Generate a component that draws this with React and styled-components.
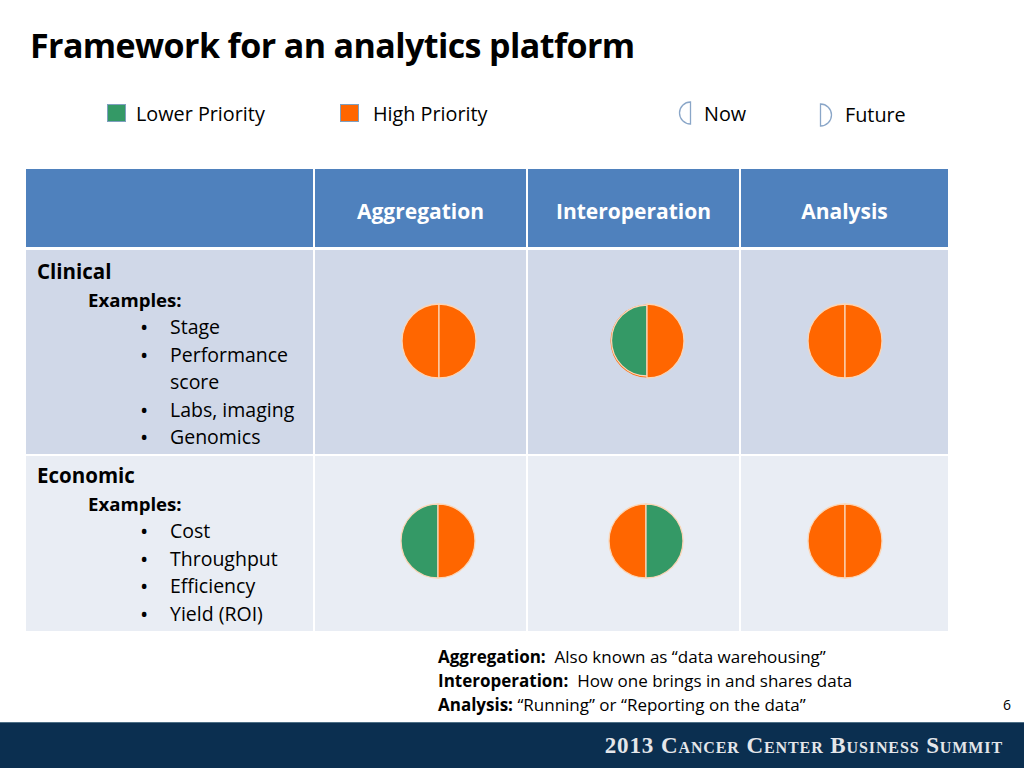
import React from 'react'
import styled, { createGlobalStyle } from 'styled-components'

const GlobalStyle = createGlobalStyle`
  html, body {
    margin: 0;
    padding: 0;
    background: #FFFFFF;
  }
  body {
    font-family: "Open Sans", "Noto Sans", sans-serif;
    color: #000000;
  }
`

const GREEN = '#349966'
const ORANGE = '#FF6600'

const Slide = styled.div`
  width: 1024px;
  height: 768px;
  display: flex;
  flex-direction: column;
  overflow: hidden;
`
const Title = styled.h1`
  margin: 0;
  height: 90px;
  padding-left: 30px;
  display: flex;
  align-items: center;
  font-size: 34px;
  font-weight: 700;
  letter-spacing: -0.6px;
`
const Legend = styled.div`
  height: 46px;
  padding-left: 107px;
  display: grid;
  grid-template-columns: 233px 338px 141px auto;
  align-items: center;
`
const LegendItem = styled.div`
  display: flex;
  align-items: center;
  gap: ${(p) => p.$gap}px;
  font-size: 19.8px;
  padding-top: ${(p) => p.$drop || 0}px;
`
const Swatch = styled.span`
  width: 19px;
  height: 18px;
  background: ${(p) => p.$color};
  border: 1px solid #7f9fbf;
  box-sizing: border-box;
`
const Table = styled.div`
  margin: 33px 0 0 26px;
  width: 922px;
  display: grid;
  grid-template-columns: 287px 211px 211px 207px;
  grid-template-rows: 79px 204px 175px;
  column-gap: 2px;
  row-gap: 2px;
  background: #FFFFFF;
`
const HeadCell = styled.div`
  background: #4F81BD;
  color: #FFFFFF;
  font-weight: 700;
  font-size: 21px;
  display: flex;
  align-items: center;
  justify-content: center;
  padding-top: 5px;
  margin-bottom: 1px;
`
const LabelCell = styled.div`
  background: ${(p) => p.$bg};
  padding: ${(p) => p.$top}px 6px 0 11px;
  font-size: 19.5px;
  line-height: 27.5px;
`
const RowName = styled.div`
  font-weight: 700;
  font-size: 20.5px;
`
const Examples = styled.div`
  font-weight: 700;
  font-size: 18.6px;
  padding-left: 51px;
`
const Bullets = styled.ul`
  list-style: none;
  margin: 0;
  padding: 0 0 0 103px;
`
const Bullet = styled.li`
  display: grid;
  grid-template-columns: 30px 1fr;
  &::before {
    content: '•';
    font-size: 22px;
  }
`
const CircleCell = styled.div`
  background: ${(p) => p.$bg};
  display: flex;
  align-items: center;
  justify-content: center;
  padding-left: ${(p) => p.$dx * 2}px;
  padding-bottom: ${(p) => p.$dy * 2}px;
`
const Notes = styled.div`
  margin: 14px 0 0 438px;
  font-size: 17px;
  line-height: 24px;
  display: grid;
  grid-template-columns: 560px auto;
`
const Note = styled.div`
  grid-column: 1;
`
const PageNumber = styled.div`
  grid-column: 2;
  grid-row: 3;
  font-size: 14px;
  padding-left: 5px;
`
const Footer = styled.div`
  margin-top: auto;
  height: 45px;
  background: #0B2F50;
  border-top: 1px solid #4E6F86;
  display: flex;
  align-items: center;
  justify-content: flex-end;
  padding-right: 21px;
`
const FooterText = styled.div`
  font-family: "Liberation Serif", "DejaVu Serif", serif;
  font-variant: small-caps;
  font-weight: 700;
  font-size: 23px;
  letter-spacing: 0.9px;
  color: #E4E6EA;
`

const HalfIcon = ({ side }) => (
  <svg width="14" height="24" viewBox="0 0 14 24">
    {side === 'left'
      ? <path d="M12.5 1 A11 11 0 0 0 12.5 23 Z" fill="none" stroke="#8AA6C8" strokeWidth="1.3" />
      : <path d="M1.5 1 A11 11 0 0 1 1.5 23 Z" fill="none" stroke="#8AA6C8" strokeWidth="1.3" />}
  </svg>
)

const Split = ({ left, right, under }) => (
  <svg width="78" height="78" viewBox="0 0 78 78">
    {under && <circle cx="39" cy="39" r="36.5" fill={under} />}
    <path
      d={under ? 'M39 3 A35.5 35.5 0 0 0 39 74 Z' : 'M39 2 A37 37 0 0 0 39 76 Z'}
      fill={left}
      stroke="#FBD5B5"
      strokeWidth="1.3"
    />
    <path d="M39 2 A37 37 0 0 1 39 76 Z" fill={right} stroke="#FBD5B5" strokeWidth="1.3" />
  </svg>
)

const rows = [
  {
    name: 'Clinical',
    bg: '#D0D8E8',
    top: 8,
    dy: 11,
    items: ['Stage', 'Performance score', 'Labs, imaging', 'Genomics'],
    circles: [
      { left: ORANGE, right: ORANGE, dx: 18 },
      { left: GREEN, right: ORANGE, under: ORANGE, dx: 13 },
      { left: ORANGE, right: ORANGE, dx: 0 },
    ],
  },
  {
    name: 'Economic',
    bg: '#E9EDF4',
    top: 6,
    dy: 3,
    items: ['Cost', 'Throughput', 'Efficiency', 'Yield (ROI)'],
    circles: [
      { left: GREEN, right: ORANGE, dx: 17 },
      { left: ORANGE, right: GREEN, dx: 12 },
      { left: ORANGE, right: ORANGE, dx: 0 },
    ],
  },
]

const App = () => (
  <Slide>
    <GlobalStyle />
    <Title>Framework for an analytics platform</Title>
    <Legend>
      <LegendItem $gap={10}><Swatch $color={GREEN} />Lower Priority</LegendItem>
      <LegendItem $gap={14}><Swatch $color={ORANGE} />High Priority</LegendItem>
      <LegendItem $gap={12}><HalfIcon side="left" />Now</LegendItem>
      <LegendItem $gap={12} $drop={3}><HalfIcon side="right" />Future</LegendItem>
    </Legend>
    <Table>
      <HeadCell />
      <HeadCell>Aggregation</HeadCell>
      <HeadCell>Interoperation</HeadCell>
      <HeadCell>Analysis</HeadCell>
      {rows.map((row) => (
        <React.Fragment key={row.name}>
          <LabelCell $bg={row.bg} $top={row.top}>
            <RowName>{row.name}</RowName>
            <Examples>Examples:</Examples>
            <Bullets>
              {row.items.map((item) => <Bullet key={item}>{item}</Bullet>)}
            </Bullets>
          </LabelCell>
          {row.circles.map((c, i) => (
            <CircleCell key={i} $bg={row.bg} $dx={c.dx} $dy={row.dy}>
              <Split left={c.left} right={c.right} under={c.under} />
            </CircleCell>
          ))}
        </React.Fragment>
      ))}
    </Table>
    <Notes>
      <Note><b>Aggregation:</b>&nbsp; Also known as “data warehousing”</Note>
      <Note><b>Interoperation:</b>&nbsp; How one brings in and shares data</Note>
      <Note><b>Analysis:</b> “Running” or “Reporting on the data”</Note>
      <PageNumber>6</PageNumber>
    </Notes>
    <Footer>
      <FooterText>2013 Cancer Center Business Summit</FooterText>
    </Footer>
  </Slide>
)

export default App
